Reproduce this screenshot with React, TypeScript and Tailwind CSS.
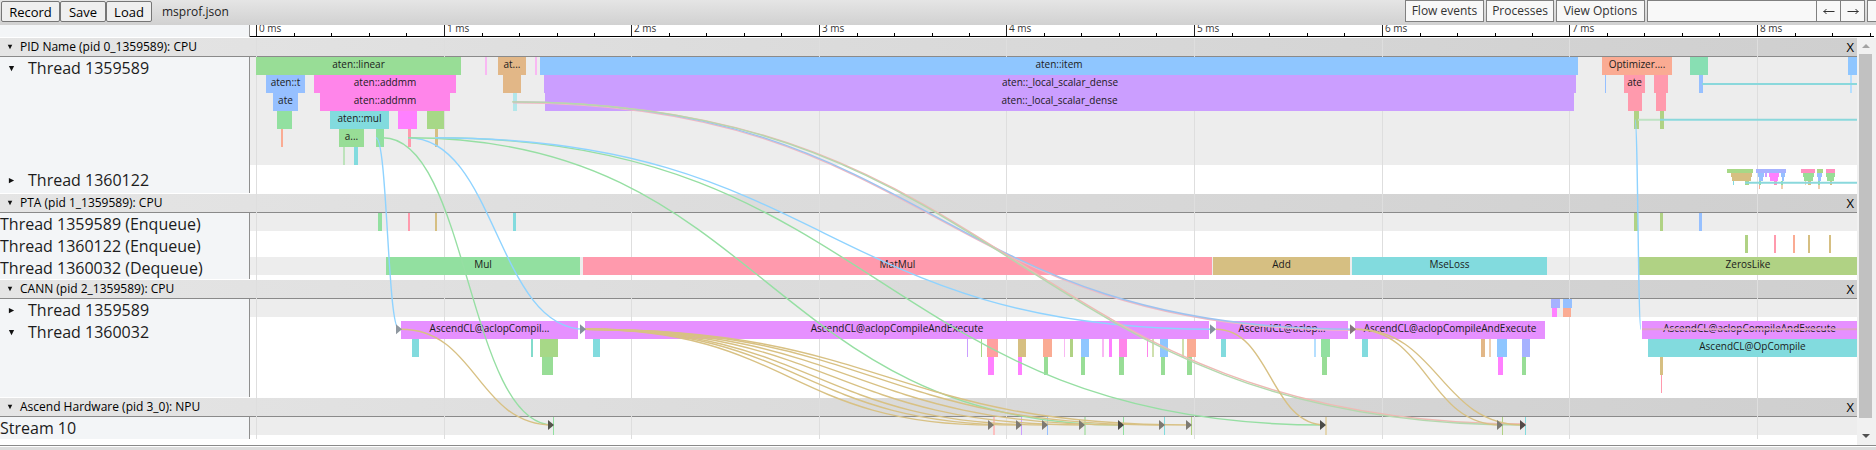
import React, { useState } from "react";

/** Width of the visible time window in timeline units. */
const SPAN = 1607;
const pct = (v: number) => `${(v / SPAN) * 100}%`;

const C = {
  green: "#98dd96",
  mint: "#92e0a0",
  sea: "#88dfb3",
  aqua: "#82dbcb",
  olive: "#a7d887",
  lime: "#b0d284",
  blue: "#96c0ff",
  sky: "#8fc6ff",
  peri: "#a6b2ff",
  violet: "#cb9eff",
  purple: "#e690ff",
  magenta: "#ff80ff",
  pink: "#ff85ea",
  hot: "#ff8fbf",
  rose: "#ff9aad",
  red: "#ffa0a0",
  salmon: "#faab93",
  teal: "#82dbde",
  tan: "#d6bf82",
  sand: "#e2b787",
  paleGreen: "#bde3bb",
  paleTeal: "#b2e7ea",
  palePink: "#f9b8f3",
  paleSky: "#b5dfff",
  paleSand: "#efcfb0",
};

/** start, end, depth, colour, title */
type Slice = [number, number, number, string, string?];

type Track = {
  name: string;
  toggle?: "open" | "closed";
  rows: number;
  size: 4 | 9 | 18;
  shaded: boolean;
  slices: Slice[];
};

type Process = { name: string; tracks: Track[] };

const processes: Process[] = [
  {
    name: "PID Name (pid 0_1359589): CPU",
    tracks: [
      {
        name: "Thread 1359589",
        toggle: "open",
        rows: 6,
        size: 18,
        shaded: true,
        slices: [
          [6, 211, 0, C.green, "aten::linear"],
          [235, 237, 0, C.palePink],
          [248, 276, 0, C.sand, "at..."],
          [285, 287, 0, C.palePink],
          [290, 1328, 0, C.sky, "aten::item"],
          [1352, 1422, 0, C.salmon, "Optimizer...."],
          [1440, 1458, 0, C.sea],
          [1598, 1607, 0, C.sky],
          [16, 55, 1, C.blue, "aten::t"],
          [64, 206, 1, C.pink, "aten::addmm"],
          [253, 271, 1, C.sand],
          [294, 1326, 1, C.violet, "aten::_local_scalar_dense"],
          [1355, 1356, 1, C.blue],
          [1374, 1395, 1, C.rose, "ate"],
          [1404, 1418, 1, C.rose],
          [1449, 1453, 1, C.blue],
          [1600, 1602, 1, C.paleSky],
          [23, 48, 2, C.blue, "ate"],
          [70, 200, 2, C.pink, "aten::addmm"],
          [263, 267, 2, C.paleTeal],
          [295, 1324, 2, C.violet, "aten::_local_scalar_dense"],
          [1378, 1392, 2, C.rose],
          [1406, 1416, 2, C.rose],
          [27, 42, 3, C.mint],
          [80, 139, 3, C.teal, "aten::mul"],
          [148, 167, 3, C.magenta],
          [177, 194, 3, C.olive],
          [1384, 1389, 3, C.lime],
          [1410, 1414, 3, C.lime],
          [31, 33, 4, C.salmon],
          [89, 114, 4, C.green, "a..."],
          [126, 134, 4, C.mint],
          [158, 161, 4, C.rose],
          [185, 188, 4, C.tan],
          [93, 95, 5, C.paleGreen],
          [104, 108, 5, C.teal],
        ],
      },
      {
        name: "Thread 1360122",
        toggle: "closed",
        rows: 5,
        size: 4,
        shaded: false,
        slices: [
          [1477, 1503, 0, C.olive],
          [1506, 1536, 0, C.peri],
          [1551, 1565, 0, C.hot],
          [1567, 1573, 0, C.olive],
          [1576, 1585, 0, C.hot],
          [1481, 1502, 1, C.tan],
          [1508, 1514, 1, C.blue],
          [1515, 1517, 1, C.violet],
          [1519, 1529, 1, C.magenta],
          [1531, 1535, 1, C.blue],
          [1553, 1564, 1, C.green],
          [1567, 1572, 1, C.blue],
          [1576, 1585, 1, C.green],
          [1482, 1501, 2, C.tan],
          [1509, 1513, 2, C.blue],
          [1520, 1528, 2, C.magenta],
          [1532, 1534, 2, C.blue],
          [1554, 1563, 2, C.green],
          [1568, 1571, 2, C.blue],
          [1577, 1584, 2, C.green],
          [1483, 1484, 3, C.teal],
          [1495, 1499, 3, C.olive],
          [1509, 1511, 3, C.mint],
          [1524, 1527, 3, C.hot],
          [1531, 1533, 3, C.mint],
          [1555, 1556, 3, C.paleSand],
          [1558, 1561, 3, C.tan],
          [1568, 1570, 3, C.mint],
          [1580, 1582, 3, C.tan],
          [1509, 1510, 4, C.salmon],
          [1531, 1533, 4, C.paleSand],
          [1568, 1570, 4, C.paleSand],
        ],
      },
    ],
  },
  {
    name: "PTA (pid 1_1359589): CPU",
    tracks: [
      {
        name: "Thread 1359589 (Enqueue)",
        rows: 1,
        size: 18,
        shaded: true,
        slices: [
          [128, 132, 0, C.mint],
          [158, 160, 0, C.rose],
          [185, 187, 0, C.tan],
          [263, 266, 0, C.teal],
          [1384, 1388, 0, C.lime],
          [1410, 1413, 0, C.lime],
          [1449, 1452, 0, C.blue],
        ],
      },
      {
        name: "Thread 1360122 (Enqueue)",
        rows: 1,
        size: 18,
        shaded: false,
        slices: [
          [1495, 1498, 0, C.lime],
          [1524, 1526, 0, C.rose],
          [1543, 1545, 0, C.salmon],
          [1558, 1560, 0, C.tan],
          [1579, 1581, 0, C.tan],
        ],
      },
      {
        name: "Thread 1360032 (Dequeue)",
        rows: 1,
        size: 18,
        shaded: true,
        slices: [
          [136, 330, 0, C.mint, "Mul"],
          [333, 962, 0, C.rose, "MatMul"],
          [963, 1100, 0, C.tan, "Add"],
          [1102, 1297, 0, C.teal, "MseLoss"],
          [1389, 1607, 0, C.lime, "ZerosLike"],
        ],
      },
    ],
  },
  {
    name: "CANN (pid 2_1359589): CPU",
    tracks: [
      {
        name: "Thread 1359589",
        toggle: "closed",
        rows: 2,
        size: 9,
        shaded: true,
        slices: [
          [1301, 1310, 0, C.peri],
          [1313, 1322, 0, C.blue],
          [1302, 1307, 1, C.magenta],
          [1313, 1321, 1, C.salmon],
        ],
      },
      {
        name: "Thread 1360032",
        toggle: "open",
        rows: 4,
        size: 18,
        shaded: false,
        slices: [
          [151, 328, 0, C.purple, "AscendCL@aclopCompil..."],
          [335, 959, 0, C.purple, "AscendCL@aclopCompileAndExecute"],
          [966, 1098, 0, C.purple, "AscendCL@aclop..."],
          [1105, 1295, 0, C.purple, "AscendCL@aclopCompileAndExecute"],
          [1392, 1607, 0, C.purple, "AscendCL@aclopCompileAndExecute"],
          [162, 169, 1, C.teal],
          [281, 283, 1, C.aqua],
          [290, 308, 1, C.olive],
          [343, 350, 1, C.teal],
          [717, 718, 1, C.violet],
          [731, 732, 1, C.olive],
          [737, 748, 1, C.red],
          [768, 776, 1, C.tan],
          [793, 802, 1, C.salmon],
          [814, 815, 1, C.palePink],
          [820, 823, 1, C.lime],
          [831, 839, 1, C.sky],
          [852, 854, 1, C.palePink],
          [859, 862, 1, C.magenta],
          [869, 877, 1, C.pink],
          [897, 898, 1, C.pink],
          [902, 904, 1, "#cfe0ae"],
          [910, 918, 1, C.sky],
          [932, 934, 1, "#cfe0ae"],
          [937, 946, 1, C.salmon],
          [971, 976, 1, C.teal],
          [1064, 1066, 1, C.paleSky],
          [1071, 1080, 1, C.mint],
          [1112, 1118, 1, C.teal],
          [1231, 1235, 1, C.sand],
          [1239, 1241, 1, C.paleSand],
          [1247, 1257, 1, C.sky],
          [1272, 1280, 1, C.peri],
          [1398, 1607, 1, C.teal, "AscendCL@OpCompile"],
          [292, 303, 2, C.green],
          [738, 744, 2, C.magenta],
          [768, 772, 2, C.magenta],
          [794, 798, 2, C.green],
          [831, 835, 2, C.green],
          [869, 874, 2, C.green],
          [911, 915, 2, C.green],
          [937, 942, 2, C.green],
          [1072, 1077, 2, C.green],
          [1248, 1253, 2, C.magenta],
          [1272, 1276, 2, C.green],
          [1410, 1413, 2, C.tan],
          [1411, 1412, 3, C.rose],
        ],
      },
    ],
  },
  {
    name: "Ascend Hardware (pid 3_0): NPU",
    tracks: [
      {
        name: "Stream 10",
        rows: 1,
        size: 18,
        shaded: true,
        slices: [
          [303, 304, 0, C.mint],
          [743, 745, 0, "#fbc0c0"],
          [771, 772, 0, C.violet],
          [797, 798, 0, C.blue],
          [834, 836, 0, C.paleGreen],
          [873, 874, 0, C.mint],
          [914, 915, 0, C.teal],
          [941, 942, 0, C.lime],
          [1075, 1077, 0, "#e4d6b0"],
          [1252, 1253, 0, C.lime],
          [1275, 1276, 0, C.teal],
        ],
      },
    ],
  },
];

const GRID = [6, 194, 381, 569, 756, 944, 1132, 1319, 1507];

const FLOW_BLUE = "#8fd3ff";
const FLOW_GREEN = "#96dfa3";
const FLOW_TAN = "#d8c184";
const FLOW_TEAL = "#8ad8dc";

/** x1, y1, x2, y2, colour */
type Flow = [number, number, number, number, string];

const flows: Flow[] = [
  [126, 100, 149, 292, FLOW_BLUE],
  [133, 100, 303, 388, FLOW_GREEN],
  [158, 100, 335, 292, FLOW_BLUE],
  [158, 100, 873, 388, FLOW_GREEN],
  [185, 100, 1075, 388, FLOW_GREEN],
  [185, 100, 965, 292, FLOW_BLUE],
  [263, 65, 1105, 293, "#efb9c4"],
  [263, 64, 1105, 292, "#9cc3f0"],
  [263, 64, 1276, 387, "#efb9b4"],
  [262, 64, 1274, 388, "#b4d8ae"],
  [151, 292, 303, 388, FLOW_TAN],
  [335, 292, 744, 388, FLOW_TAN],
  [335, 292, 771, 388, FLOW_TAN],
  [335, 292, 797, 388, FLOW_TAN],
  [335, 292, 834, 388, FLOW_TAN],
  [335, 292, 873, 388, FLOW_TAN],
  [335, 292, 914, 388, FLOW_TAN],
  [335, 292, 941, 388, FLOW_TAN],
  [966, 292, 1075, 388, FLOW_TAN],
  [1105, 292, 1251, 388, FLOW_TAN],
  [1105, 292, 1274, 388, FLOW_TAN],
  [1385, 82, 1391, 292, FLOW_BLUE],
];

const flats: Flow[] = [
  [1452, 46, 1607, 46, FLOW_TEAL],
  [1388, 82, 1410, 82, "#bfe3c4"],
  [1410, 82, 1607, 82, FLOW_TEAL],
  [1495, 145, 1607, 145, FLOW_TEAL],
  [1392, 292, 1607, 292, "#dda4c4"],
];

/** x of the tip, y, fill */
const arrows: [number, number, string][] = [
  [151, 292, "#8f98a0"],
  [335, 292, "#84909c"],
  [965, 292, "#84909c"],
  [1105, 292, "#85757c"],
  [303, 388, "#55554c"],
  [743, 388, "#7d7a72"],
  [771, 388, "#7d7a72"],
  [797, 388, "#7d7a72"],
  [834, 388, "#7d7a72"],
  [873, 388, "#4b4b46"],
  [914, 388, "#7d7a72"],
  [941, 388, "#7d7a72"],
  [1075, 388, "#4b4b46"],
  [1252, 388, "#7d7a72"],
  [1275, 388, "#544a48"],
];

function curve([x1, y1, x2, y2]: Flow) {
  const mid = (x1 + x2) / 2;
  return `M${x1} ${y1}C${mid} ${y1} ${mid} ${y2} ${x2} ${y2}`;
}

function Twisty({ open, small }: { open: boolean; small?: boolean }) {
  return (
    <svg
      viewBox="0 0 8 8"
      className={small ? "size-[6px] shrink-0" : "size-[7px] shrink-0"}
      aria-hidden="true"
    >
      <path d={open ? "M1 1H7L4 7Z" : "M1 1V7L7 4Z"} fill="#111" />
    </svg>
  );
}

function Toolbar() {
  const [query, setQuery] = useState("");
  const left =
    "h-[21px] rounded-[2px] border border-[#767676] bg-[#efefef] text-center text-[13px] leading-[18px] text-black";
  const right =
    "h-[22px] shrink-0 border border-[#808080] bg-[#f8f8f8] text-[12px] leading-[20px] text-[#333]";
  return (
    <header className="flex h-[25px] items-start overflow-hidden bg-linear-to-b from-[#e5e5e5] to-[#d1d1d1]">
      <div className="flex items-center pt-px pl-px">
        <button className={`${left} w-[59px]`}>Record</button>
        <button className={`${left} w-[46px]`}>Save</button>
        <button className={`${left} w-[46px]`}>Load</button>
        <span className="pl-[10px] text-[12px] leading-[21px] text-[#222]">msprof.json</span>
      </div>
      <div className="ml-auto flex items-start gap-[2px]">
        <button className={`${right} w-[79px]`}>Flow events</button>
        <button className={`${right} w-[68px]`}>Processes</button>
        <button className={`${right} w-[89px]`}>View Options</button>
        <div className="flex">
          <input
            aria-label="Search"
            value={query}
            onChange={(e) => setQuery(e.target.value)}
            className={`${right} w-[170px] px-1 outline-none`}
          />
          <button aria-label="Previous" className={`${right} -ml-px flex w-[25px] items-center justify-center`}>
            <svg viewBox="0 0 12 8" className="h-2 w-3" fill="none" stroke="#333">
              <path d="M0.5 4.5H11.5M3.5 2L1 4.5L3.5 7" />
            </svg>
          </button>
          <button aria-label="Next" className={`${right} -ml-px flex w-[25px] items-center justify-center`}>
            <svg viewBox="0 0 12 8" className="h-2 w-3" fill="none" stroke="#333">
              <path d="M0.5 4.5H11.5M8.5 2L11 4.5L8.5 7" />
            </svg>
          </button>
        </div>
        <button aria-label="Help" className={`${right} w-[9px] border-r-0`} />
      </div>
    </header>
  );
}

function Ruler() {
  return (
    <div className="mb-px flex h-[12px] pr-[2px]">
      <div className="w-[250px] shrink-0 border-r border-[#8f8f8f] bg-[#f3f5f7]" />
      <div className="min-w-0 flex-1 overflow-hidden border-b border-black">
        <div className="relative mr-[17px] h-full">
          {GRID.map((x, i) => (
            <React.Fragment key={x}>
              <div
                className="absolute top-0 h-full border-l border-[#222] pl-[2px] text-[10px] leading-[6px] whitespace-nowrap text-[#333]"
                style={{ left: pct(x) }}
              >
                {`${i} ms`}
              </div>
              {[1, 2, 3, 4].map((n) => (
                <div
                  key={n}
                  className="absolute bottom-0 h-[3px] w-px bg-black"
                  style={{ left: pct(x + Math.round(n * 37.5)) }}
                />
              ))}
            </React.Fragment>
          ))}
        </div>
      </div>
    </div>
  );
}

function TrackRow({ track }: { track: Track }) {
  return (
    <div className="flex">
      <div className="w-[250px] shrink-0 border-r border-[#8f8f8f] bg-[#f3f5f7]">
        <div className="flex h-[22px] items-center text-[16px] whitespace-nowrap text-[#1c1c1c]">
          {track.toggle ? (
            <button className="flex items-center gap-[13px] pl-[8px]">
              <Twisty open={track.toggle === "open"} />
              {track.name}
            </button>
          ) : (
            <span>{track.name}</span>
          )}
        </div>
      </div>
      <div className="min-w-0 flex-1 pb-[4px]">
        <div
          className={`relative overflow-hidden ${track.shaded ? "bg-[#ededed]" : "bg-white"}`}
          style={{ height: track.rows * track.size }}
        >
          {track.slices.map(([start, end, depth, color, title], i) => (
            <div
              key={i}
              className="absolute z-20 overflow-hidden text-center text-[10px] leading-[14px] whitespace-nowrap text-[#1b1b1b]"
              style={{
                left: pct(start),
                width: pct(end - start),
                top: depth * track.size,
                height: track.size,
                backgroundColor: color,
              }}
            >
              {title}
            </div>
          ))}
        </div>
      </div>
    </div>
  );
}

function ProcessGroup({ process }: { process: Process }) {
  return (
    <section className="mb-px">
      <div className="flex h-[19px] items-center justify-between border-b border-[#8a8a8a] bg-linear-to-r from-[#e5e5e5] to-[#cfcfcf] pr-[3px] pl-[7px]">
        <button className="flex items-center gap-[7px] text-[12px] leading-[18px] whitespace-nowrap text-black">
          <Twisty open small />
          {process.name}
        </button>
        <button aria-label="Close" className="text-[13px] leading-[18px] text-black">
          X
        </button>
      </div>
      {process.tracks.map((t) => (
        <TrackRow key={t.name} track={t} />
      ))}
    </section>
  );
}

function Gridlines() {
  return (
    <div className="pointer-events-none absolute inset-y-0 right-0 left-[250px] z-10">
      {GRID.map((x) => (
        <div key={x} className="absolute inset-y-0 w-px bg-[#dedede]" style={{ left: pct(x) }} />
      ))}
    </div>
  );
}

function Flows() {
  return (
    <div className="pointer-events-none absolute inset-y-0 right-0 left-[250px] z-30">
      <svg viewBox="0 0 1607 402" preserveAspectRatio="none" className="size-full" fill="none">
        {flats.map((f, i) => (
          <path key={i} d={`M${f[0]} ${f[1]}H${f[2]}`} stroke={f[4]} strokeWidth="2" vectorEffect="non-scaling-stroke" />
        ))}
        {flows.map((f, i) => (
          <path key={i} d={curve(f)} stroke={f[4]} strokeWidth="1.4" vectorEffect="non-scaling-stroke" />
        ))}
        {arrows.map(([x, y, fill], i) => (
          <path key={i} d={`M${x - 5} ${y - 5}L${x + 1} ${y}L${x - 5} ${y + 5}Z`} fill={fill} />
        ))}
      </svg>
    </div>
  );
}

function Scrollbar() {
  return (
    <div className="flex w-[19px] shrink-0 flex-col bg-[#f1f1f1] pr-[4px] pl-[2px]" aria-hidden="true">
      <div className="flex h-[16px] items-center justify-center">
        <svg viewBox="0 0 8 4" className="h-1 w-2">
          <path d="M0 4L4 0L8 4Z" fill="#a3a3a3" />
        </svg>
      </div>
      <div className="flex-1 bg-[#c1c1c1]" />
      <div className="flex h-[27px] items-end justify-center pb-[7px]">
        <svg viewBox="0 0 8 4" className="h-1 w-2">
          <path d="M0 0L4 4L8 0Z" fill="#505050" />
        </svg>
      </div>
    </div>
  );
}

export default function App() {
  return (
    <div className="flex min-h-screen flex-col bg-white font-[Open_Sans,Noto_Sans,sans-serif]">
      <Toolbar />
      <Ruler />
      <main className="flex border-b border-[#8a8a8a]">
        <div className="min-w-0 flex-1 pb-[5px]">
          <div className="relative">
            {processes.map((p) => (
              <ProcessGroup key={p.name} process={p} />
            ))}
            <Gridlines />
            <Flows />
          </div>
        </div>
        <Scrollbar />
      </main>
      <footer className="mt-px flex-1 bg-[#dddddd]" />
    </div>
  );
}
